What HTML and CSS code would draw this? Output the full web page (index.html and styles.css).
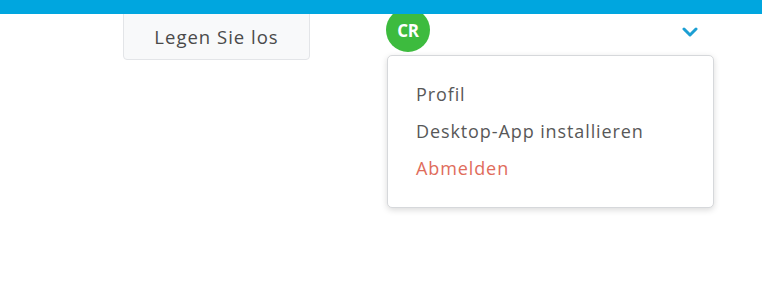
FILE: index.html
```html
<!DOCTYPE html>
<html lang="de">
<head>
    <meta charset="UTF-8">
    <meta name="viewport" content="width=device-width, initial-scale=1.0">
    <title>Konto</title>
    <link rel="stylesheet" href="styles.css">
</head>
<body>
    <div class="topbar"></div>

    <div class="toolbar">
        <button class="start-btn">Legen Sie los</button>

        <div class="user-menu">
            <div class="avatar">CR</div>
            <span class="chevron">
                <svg width="16" height="10" viewBox="0 0 16 10">
                    <path d="M2 2 L8 8 L14 2" fill="none" stroke="#1c9fd3" stroke-width="3" stroke-linecap="round" stroke-linejoin="round"/>
                </svg>
            </span>

            <ul class="dropdown">
                <li><a href="#" class="dropdown-item">Profil</a></li>
                <li><a href="#" class="dropdown-item">Desktop-App installieren</a></li>
                <li><a href="#" class="dropdown-item logout">Abmelden</a></li>
            </ul>
        </div>
    </div>
</body>
</html>
```

FILE: styles.css
```css
* {
    margin: 0;
    padding: 0;
    box-sizing: border-box;
    font-family: 'Open Sans', 'Liberation Sans', sans-serif;
}

body {
    background-color: white;
    height: 296px;
}

.topbar {
    position: relative;
    z-index: 2;
    height: 14px;
    background-color: #00a6df;
}

.toolbar {
    display: flex;
    align-items: flex-start;
    margin-top: -6px;
    padding-left: 123px;
}

.start-btn {
    width: 187px;
    height: 52px;
    padding-top: 4px;
    background-color: #f8f9fa;
    border: 1px solid #e3e5e8;
    border-radius: 4px;
    color: #4a4a4a;
    font-size: 18.5px;
    letter-spacing: 1px;
    cursor: pointer;
}

.user-menu {
    position: relative;
    display: flex;
    align-items: center;
    width: 328px;
    height: 44px;
    margin-left: 76px;
    padding-right: 16px;
    justify-content: space-between;
}

.avatar {
    width: 44px;
    height: 44px;
    border-radius: 50%;
    background-color: #3dbb3e;
    color: white;
    font-size: 17px;
    font-weight: bold;
    letter-spacing: -0.3px;
    display: flex;
    align-items: center;
    justify-content: center;
}

.chevron {
    display: flex;
    margin-top: 4px;
}

.dropdown {
    position: absolute;
    top: 47px;
    left: 1px;
    width: 327px;
    height: 153px;
    padding: 20px 0 21px 28px;
    list-style: none;
    background-color: white;
    border: 1px solid #d6d8db;
    border-radius: 5px;
    box-shadow: 0 2px 6px rgba(0,0,0,0.15);
}

.dropdown-item {
    display: block;
    line-height: 37px;
    font-size: 18px;
    letter-spacing: 0.9px;
    color: #585858;
    text-decoration: none;
}

.dropdown-item.logout {
    color: #e06c5b;
}
```
